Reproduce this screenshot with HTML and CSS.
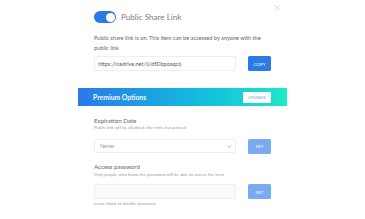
FILE: index.html
```html
<!DOCTYPE html>
<html>
<head>
<meta charset="utf-8">
<link rel="stylesheet" href="styles.css">
</head>
<body>
<div class="modal">
  <span class="close">&#215;</span>
  <div class="header">
    <span class="toggle"><span class="knob"></span></span>
    <span class="title">Public Share Link</span>
  </div>
  <p class="desc">Public share link is on. This item can be accessed by anyone with the public link</p>
  <div class="row">
    <div class="field">https://icedrive.net/0/dfDbpoaqc6</div>
    <button class="btn btn-primary">COPY</button>
  </div>
  <div class="banner">
    <span class="banner-title">Premium Options</span>
    <span class="upgrade">UPGRADE</span>
  </div>
  <div class="label label-first">Expiration Date</div>
  <div class="hint">Public link will be disabled after time has passed</div>
  <div class="row row-select">
    <div class="field select"><span>Never</span><svg class="chev" width="5" height="3" viewBox="0 0 5 3"><path d="M0.5 0.5 L2.5 2.5 L4.5 0.5" fill="none" stroke="#999" stroke-width="0.6"/></svg></div>
    <button class="btn btn-light">SET</button>
  </div>
  <div class="label label-second">Access password</div>
  <div class="hint hint-tight">Only people who know the password will be able to access the item</div>
  <div class="row row-pass">
    <div class="field pass"></div>
    <button class="btn btn-light">SET</button>
  </div>
  <div class="hint hint-bottom">Leave blank to disable password</div>
</div>
</body>
</html>
```

FILE: styles.css
```css
html, body {
  margin: 0;
  padding: 0;
  background: #ffffff;
}
body {
  font-family: "Lato", "Open Sans", sans-serif;
  color: #555;
}
.modal {
  position: relative;
  width: 177px;
  margin-left: 78px;
  padding: 0 16px;
}
.close {
  position: absolute;
  left: 195px;
  top: 1px;
  font-size: 10px;
  line-height: 14px;
  color: #cfd6de;
  font-family: "DejaVu Sans", sans-serif;
  font-weight: 200;
}
.header {
  display: flex;
  align-items: center;
  gap: 5px;
  padding-top: 11px;
  height: 12px;
}
.toggle {
  position: relative;
  width: 22px;
  height: 12px;
  border-radius: 6px;
  background: #2a79e6;
  flex: none;
}
.knob {
  position: absolute;
  right: 1.5px;
  top: 1.5px;
  width: 9px;
  height: 9px;
  border-radius: 50%;
  background: #fff;
}
.title {
  font-size: 8.1px;
  color: #7a7e85;
  line-height: 12px;
}
.desc {
  margin: 10px 0 0;
  font-size: 5.6px;
  line-height: 10px;
  color: #62666d;
}
.row {
  display: flex;
  justify-content: space-between;
  align-items: center;
  margin-top: 3px;
}
.field {
  box-sizing: border-box;
  width: 142px;
  height: 15px;
  border: 0.6px solid #eceef0;
  border-radius: 2px;
  font-size: 5.5px;
  line-height: 14px;
  padding: 0 3px;
  color: #5a5e64;
}
.btn {
  box-sizing: border-box;
  width: 23px;
  height: 15px;
  border: none;
  border-radius: 1.5px;
  padding: 0;
  color: #fff;
  font-family: "Lato", "Open Sans", sans-serif;
  font-size: 4.6px;
}
.btn-primary {
  background: #2a7be6;
}
.btn-light {
  background: #79aaf2;
}
.banner {
  display: flex;
  justify-content: space-between;
  align-items: center;
  margin: 17px -16px 0;
  padding: 0 16px 0 15px;
  height: 18px;
  background: linear-gradient(90deg, #2b79e9 0%, #13b9e0 55%, #1ee8c6 100%);
}
.banner-title {
  color: #f4f8ff;
  font-size: 6.8px;
  font-weight: 700;
}
.upgrade {
  box-sizing: border-box;
  width: 28px;
  height: 11px;
  background: #fff;
  border-radius: 1px;
  color: #7aa3e6;
  font-size: 3.8px;
  line-height: 11px;
  text-align: center;
}
.label {
  font-size: 6.2px;
  line-height: 8px;
  color: #62666d;
}
.label-first {
  margin-top: 11px;
}
.label-second {
  margin-top: 10px;
}
.hint {
  font-size: 4.4px;
  line-height: 6px;
  color: #9a9ea4;
}
.hint-tight {
  margin-top: 1px;
}
.row-select {
  margin-top: 8px;
  height: 14px;
}
.select {
  display: flex;
  justify-content: space-between;
  align-items: center;
  height: 14px;
  color: #9a9ea4;
  padding: 0 3px 0 5px;
}
.chev {
  display: block;
}
.row-pass {
  margin-top: 6px;
}
.pass {
  background: #fafafa;
}
.hint-bottom {
  margin-top: 2px;
}
```
